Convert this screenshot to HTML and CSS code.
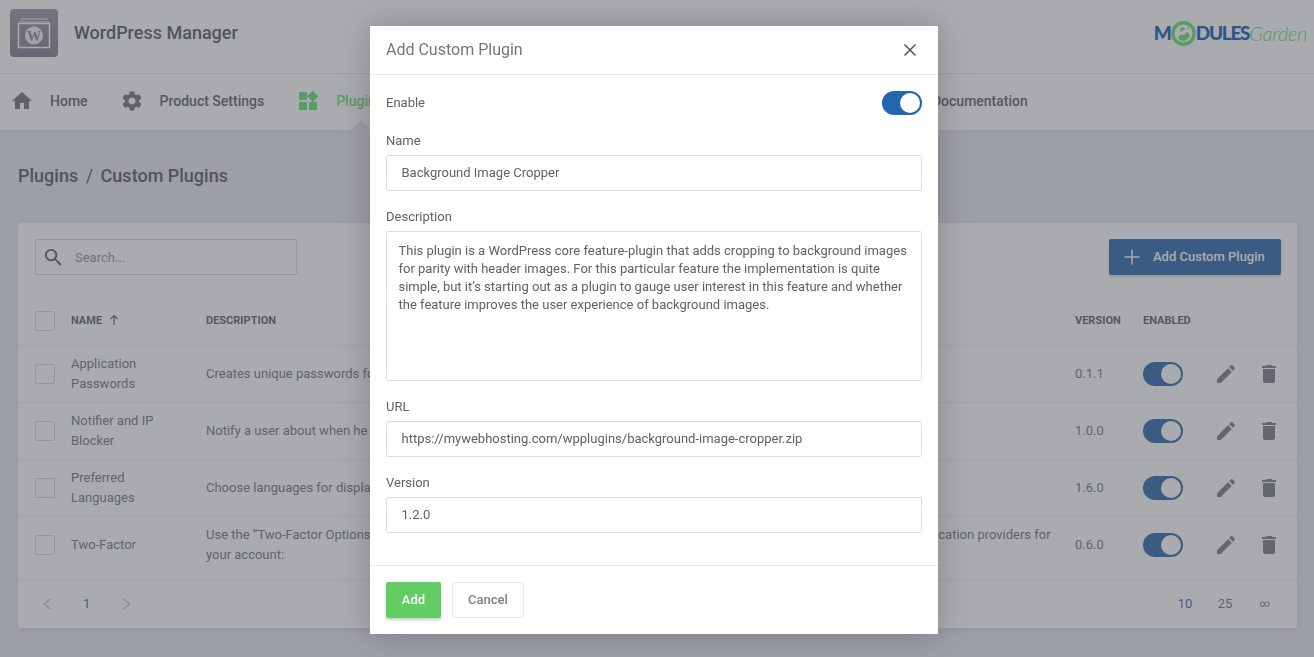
FILE: index.html
```html
<!DOCTYPE html>
<html lang="en">
<head>
<meta charset="utf-8">
<title>WordPress Manager</title>
<link rel="stylesheet" href="styles.css">
</head>
<body>
<header class="topbar">
  <div class="brand">
    <div class="app-icon">
      <svg viewBox="0 0 48 48" width="48" height="48">
        <path class="stack" d="M10 11 11 9h26l1 2zM8.500 13.500l1-1.500h29l1 1.500z"/>
        <rect class="frame" x="8.500" y="14.500" width="31" height="24" fill="none"/>
        <circle class="wp" cx="24" cy="26.500" r="9"/>
        <text class="wp-w" x="24" y="31.500" text-anchor="middle">W</text>
      </svg>
    </div>
    <span class="brand-name">WordPress Manager</span>
  </div>
  <div class="logo">
    <span class="logo-m">M</span><svg class="logo-globe" viewBox="0 0 25 25" width="25" height="25">
      <circle cx="12.500" cy="12.500" r="10.700" fill="none" stroke="#5fdc6a" stroke-width="3.400"/>
      <path fill="#5fdc6a" d="M7 17c1-3 4-4 6-3l3-3 3 3c-1 3-3 5-6 6-2 0-5-1-6-3zM9 7l4-1 1 2-4 3zM16 6l2 1-1 2z"/>
    </svg><span class="logo-m logo-rest">DULES</span><span class="logo-g">Garden</span>
  </div>
</header>

<nav class="mainnav">
  <a class="navitem">
    <svg class="navicon" viewBox="0 0 24 24"><path d="M10 20v-6h4v6h5v-8h3L12 3 2 12h3v8z"/></svg>
    <span>Home</span>
  </a>
  <a class="navitem">
    <svg class="navicon" viewBox="0 0 24 24"><path d="M19.140 12.940c.04-.3.06-.61.06-.94 0-.32-.02-.64-.07-.94l2.030-1.580c.18-.14.23-.41.12-.61l-1.920-3.320c-.12-.22-.37-.29-.59-.22l-2.390.96c-.5-.38-1.030-.7-1.620-.94l-.36-2.540c-.04-.24-.24-.41-.48-.41h-3.840c-.24 0-.43.17-.47.41l-.36 2.540c-.59.24-1.130.57-1.620.94l-2.390-.96c-.22-.08-.47 0-.59.22L2.740 8.870c-.12.21-.08.47.12.61l2.030 1.580c-.05.3-.09.63-.09.94s.02.64.07.94l-2.030 1.580c-.18.14-.23.41-.12.61l1.920 3.320c.12.22.37.29.59.22l2.390-.96c.5.38 1.030.7 1.620.94l.36 2.540c.05.24.24.41.48.41h3.840c.24 0 .44-.17.47-.41l.36-2.540c.59-.24 1.130-.56 1.620-.94l2.390.96c.22.08.47 0 .59-.22l1.920-3.320c.12-.22.07-.47-.12-.61l-2.010-1.580zM12 15.600c-1.980 0-3.600-1.620-3.600-3.600s1.620-3.600 3.600-3.600 3.600 1.620 3.600 3.600-1.620 3.600-3.600 3.600z"/></svg>
    <span>Product Settings</span>
  </a>
  <a class="navitem active">
    <svg class="navicon" viewBox="0 0 24 24"><path d="M13 13v8h8v-8h-8zM3 21h8v-8H3v8zM3 3v8h8V3H3zm13.660-1.310L11 7.340 16.660 13l5.660-5.660-5.660-5.650z"/></svg>
    <span>Plugins</span>
  </a>
  <a class="navitem hidden-wide"><span>Plugin Packages</span></a>
  <a class="navitem">
    <svg class="navicon" viewBox="0 0 24 24"><path d="M14 2H6c-1.100 0-2 .9-2 2v16c0 1.100.9 2 2 2h12c1.100 0 2-.9 2-2V8l-6-6z"/></svg>
    <span>Documentation</span>
  </a>
</nav>

<main class="content">
  <h1 class="crumbs"><span>Plugins</span><span class="crumb-sep">/</span><span>Custom Plugins</span></h1>

  <section class="card">
    <div class="toolbar">
      <div class="search">
        <svg class="search-icon" viewBox="0 0 24 24"><path d="M15.500 14h-.79l-.28-.27A6.470 6.470 0 0 0 16 9.500 6.500 6.500 0 1 0 9.500 16c1.610 0 3.090-.59 4.230-1.570l.27.28v.79l5 4.990L20.490 19l-4.990-5zm-6 0C7.010 14 5 11.990 5 9.500S7.010 5 9.500 5 14 7.010 14 9.500 11.990 14 9.500 14z"/></svg>
        <span class="placeholder">Search...</span>
      </div>
      <button class="btn-primary">
        <svg class="plus" viewBox="0 0 16 16" width="16" height="16"><path d="M8 .5v15M.5 8h15"/></svg>
        <span>Add Custom Plugin</span>
      </button>
    </div>

    <table class="plugins">
      <colgroup><col class="c-check"><col class="c-name"><col class="c-desc"><col class="c-ver"><col class="c-en"><col class="c-act"></colgroup>
      <thead>
        <tr>
          <th class="check"><span class="box"></span></th>
          <th>Name <svg class="sort" viewBox="0 0 12 12" width="12" height="12"><path d="M6 11V1.500M2.500 5 6 1.500 9.500 5"/></svg></th>
          <th>Description</th>
          <th>Version</th>
          <th>Enabled</th>
          <th></th>
        </tr>
      </thead>
      <tbody>
        <tr>
          <td class="check"><span class="box"></span></td>
          <td>Application Passwords</td>
          <td>Creates unique passwords for applications to authenticate users without revealing their main passwords.</td>
          <td>0.1.1</td>
          <td><span class="switch"></span></td>
          <td><div class="actions">
            <svg viewBox="0 0 24 24"><path d="M3 17.250V21h3.750L17.810 9.940l-3.750-3.750L3 17.250zM20.710 7.040c.39-.39.39-1.020 0-1.410l-2.340-2.340c-.39-.39-1.020-.39-1.410 0l-1.830 1.830 3.750 3.750 1.830-1.830z"/></svg>
            <svg viewBox="0 0 24 24"><path d="M6 19c0 1.100.9 2 2 2h8c1.100 0 2-.9 2-2V7H6v12zM19 4h-3.500l-1-1h-5l-1 1H5v2h14V4z"/></svg>
          </div></td>
        </tr>
        <tr>
          <td class="check"><span class="box"></span></td>
          <td>Notifier and IP Blocker</td>
          <td>Notify a user about when he logs in from a new device or an unknown IP address and block that address.</td>
          <td>1.0.0</td>
          <td><span class="switch"></span></td>
          <td><div class="actions">
            <svg viewBox="0 0 24 24"><path d="M3 17.250V21h3.750L17.810 9.940l-3.750-3.750L3 17.250zM20.710 7.040c.39-.39.39-1.020 0-1.410l-2.340-2.340c-.39-.39-1.020-.39-1.410 0l-1.830 1.830 3.750 3.750 1.830-1.830z"/></svg>
            <svg viewBox="0 0 24 24"><path d="M6 19c0 1.100.9 2 2 2h8c1.100 0 2-.9 2-2V7H6v12zM19 4h-3.500l-1-1h-5l-1 1H5v2h14V4z"/></svg>
          </div></td>
        </tr>
        <tr>
          <td class="check"><span class="box"></span></td>
          <td>Preferred Languages</td>
          <td>Choose languages for displaying WordPress in, in order of preference.</td>
          <td>1.6.0</td>
          <td><span class="switch"></span></td>
          <td><div class="actions">
            <svg viewBox="0 0 24 24"><path d="M3 17.250V21h3.750L17.810 9.940l-3.750-3.750L3 17.250zM20.710 7.040c.39-.39.39-1.020 0-1.410l-2.340-2.340c-.39-.39-1.020-.39-1.410 0l-1.830 1.830 3.750 3.750 1.830-1.830z"/></svg>
            <svg viewBox="0 0 24 24"><path d="M6 19c0 1.100.9 2 2 2h8c1.100 0 2-.9 2-2V7H6v12zM19 4h-3.500l-1-1h-5l-1 1H5v2h14V4z"/></svg>
          </div></td>
        </tr>
        <tr class="last">
          <td class="check"><span class="box"></span></td>
          <td>Two-Factor</td>
          <td>Use the “Two-Factor Options” section under “Users” → "Your Profile" to enable and configure one or multiple two-factor authentication providers for your account:</td>
          <td>0.6.0</td>
          <td><span class="switch"></span></td>
          <td><div class="actions">
            <svg viewBox="0 0 24 24"><path d="M3 17.250V21h3.750L17.810 9.940l-3.750-3.750L3 17.250zM20.710 7.040c.39-.39.39-1.020 0-1.410l-2.340-2.340c-.39-.39-1.020-.39-1.410 0l-1.830 1.830 3.750 3.750 1.830-1.830z"/></svg>
            <svg viewBox="0 0 24 24"><path d="M6 19c0 1.100.9 2 2 2h8c1.100 0 2-.9 2-2V7H6v12zM19 4h-3.500l-1-1h-5l-1 1H5v2h14V4z"/></svg>
          </div></td>
        </tr>
      </tbody>
    </table>

    <footer class="pager">
      <div class="pages">
        <svg class="chev" viewBox="0 0 10 14" width="10" height="14"><path d="M8.500 1.500 2.500 7l6 5.500"/></svg>
        <span class="current">1</span>
        <svg class="chev" viewBox="0 0 10 14" width="10" height="14"><path d="M1.500 1.500 7.500 7l-6 5.500"/></svg>
      </div>
      <div class="sizes">
        <span class="current">10</span><span>25</span><span class="inf">∞</span>
      </div>
    </footer>
  </section>
</main>

<div class="backdrop">
  <div class="modal">
    <div class="modal-head">
      <h2>Add Custom Plugin</h2>
      <svg class="close" viewBox="0 0 14 14" width="14" height="14"><path d="M1.500 1.500l11 11M12.500 1.500l-11 11"/></svg>
    </div>
    <form class="modal-body">
      <div class="enable-row">
        <label>Enable</label>
        <span class="switch big"></span>
      </div>
      <div class="field">
        <label for="f-name">Name</label>
        <input id="f-name" type="text" value="Background Image Cropper">
      </div>
      <div class="field">
        <label for="f-desc">Description</label>
        <textarea id="f-desc">This plugin is a WordPress core feature-plugin that adds cropping to background images for parity with header images. For this particular feature the implementation is quite simple, but it’s starting out as a plugin to gauge user interest in this feature and whether the feature improves the user experience of background images.</textarea>
      </div>
      <div class="field">
        <label for="f-url">URL</label>
        <input id="f-url" type="text" value="https://mywebhosting.com/wpplugins/background-image-cropper.zip">
      </div>
      <div class="field">
        <label for="f-ver">Version</label>
        <input id="f-ver" type="text" value="1.2.0">
      </div>
    </form>
    <div class="modal-foot">
      <button class="btn-add">Add</button>
      <button class="btn-cancel">Cancel</button>
    </div>
  </div>
</div>
</body>
</html>
```

FILE: styles.css
```css
* { box-sizing: border-box; }
html, body { height: 100%; }
body {
  margin: 0;
  height: 657px;
  overflow: hidden;
  background: #e4e6ec;
  font-family: Roboto, "Liberation Sans", sans-serif;
  font-size: 13px;
  color: #555561;
}

/* top bar */
.topbar {
  height: 74px;
  background: #fff;
  border-bottom: 1px solid #e8e9ee;
  display: flex;
  align-items: center;
  justify-content: space-between;
  padding: 0 7px 0 10px;
}
.brand { display: flex; align-items: center; gap: 16px; margin-top: -8px; }
.app-icon {
  width: 48px;
  height: 48px;
  border-radius: 4px;
  background: linear-gradient(#93939f, #75757f);
}
.app-icon svg { display: block; }
.stack { fill: #c4c5cb; }
.frame { stroke: #fff; stroke-width: 1.500; }
.wp { fill: #f2f2f4; }
.wp-w { font-family: "Liberation Serif", serif; font-size: 14px; font-weight: 700; fill: #83838f; }
.brand-name { font-size: 18px; font-weight: 500; color: #4d4f59; }
.logo { display: flex; align-items: center; margin-top: -7px; font-family: Lato, sans-serif; line-height: 24px; }
.logo-m { font-size: 19px; font-weight: 900; color: #0053b5; letter-spacing: -1px; }
.logo-rest { letter-spacing: -1.300px; }
.logo-g { font-family: Lato, sans-serif; font-size: 20px; font-weight: 300; font-style: italic; color: #5fd06a; letter-spacing: -.3px; }

/* nav */
.mainnav {
  height: 56px;
  background: #fff;
  display: flex;
  align-items: center;
  padding: 0 0 2px 10px;
  gap: 32px;
  box-shadow: 0 1px 2px rgba(0,0,0,.05);
}
.navitem {
  position: relative;
  display: flex;
  align-items: center;
  gap: 16px;
  font-size: 14px;
  font-weight: 500;
  color: #555561;
  height: 100%;
}
.navicon { width: 24px; height: 24px; fill: #696b75; flex: none; }
.navitem.active { color: #5fdc6a; }
.navitem.active .navicon { fill: #5fdc6a; }
.navitem.active::after {
  content: "";
  position: absolute;
  left: 58px;
  bottom: -9px;
  width: 14px;
  height: 14px;
  background: #e4e6ec;
  transform: rotate(45deg);
}
.hidden-wide { width: 445px; }

/* page */
.content { padding: 0 17px 0 18px; }
.crumbs {
  margin: 0;
  height: 93px;
  display: flex;
  align-items: center;
  font-size: 18px;
  font-weight: 500;
  color: #4d4f59;
  padding-bottom: 3px;
}
.crumb-sep { margin: 0 7.500px; font-weight: 400; }

.card {
  background: #fff;
  border-radius: 3px;
  box-shadow: 0 2px 6px rgba(0,0,0,.08);
}
.toolbar {
  display: flex;
  justify-content: space-between;
  padding: 16px 16px 20px 17px;
}
.search {
  width: 262px;
  height: 36px;
  border: 1px solid #d3d4de;
  border-radius: 2px;
  display: flex;
  align-items: center;
  padding-left: 6px;
  gap: 10px;
}
.search-icon { width: 23px; height: 23px; fill: #4b4d58; }
.placeholder { color: #8a8b96; font-size: 13px; }
.btn-primary {
  width: 172px;
  height: 36px;
  border: 0;
  border-radius: 2px;
  background: #1f5fa6;
  color: #fff;
  font: 500 13px Roboto, sans-serif;
  display: flex;
  align-items: center;
  padding: 0 0 2px 15px;
  gap: 13px;
  box-shadow: 0 2px 3px rgba(0,0,0,.15);
}
.plus { fill: none; stroke: #fff; stroke-width: 1.500; margin-top: 2px; }

/* table */
.plugins { width: 100%; border-collapse: collapse; table-layout: fixed; }
.c-check { width: 53px; }
.c-name { width: 135px; }
.c-desc { width: 869px; }
.c-ver { width: 68px; }
.c-en { width: 73px; }
.plugins th {
  height: 50px;
  padding: 2px 0 0;
  text-align: left;
  font-size: 11px;
  font-weight: 700;
  text-transform: uppercase;
  color: #555561;
  border-bottom: 1px solid #eceef3;
}
.plugins td {
  height: 57px;
  padding: 0 20px 0 0;
  line-height: 20px;
  color: #6a6b76;
  border-bottom: 1px solid #eceef3;
}
.plugins .last td { height: 63px; padding-bottom: 6px; }
.plugins td:nth-child(2) { padding-right: 16px; }
.plugins td.check, .plugins th.check { padding-left: 17px; }
.box {
  display: block;
  width: 20px;
  height: 20px;
  border: 1px solid #d3d4de;
  border-radius: 2px;
}
.sort { fill: none; stroke: #555561; stroke-width: 1.200; margin-left: 3px; vertical-align: -2px; }
.switch {
  display: block;
  position: relative;
  width: 40px;
  height: 24px;
  border-radius: 12px;
  background: #1f5fa6;
}
.switch::after {
  content: "";
  position: absolute;
  right: 2px;
  top: 2px;
  width: 20px;
  height: 20px;
  border-radius: 50%;
  background: #fff;
}
.switch.big { background: #2267ad; }
.actions { display: flex; gap: 19px; margin-left: -2px; }
.actions svg { width: 24px; height: 24px; fill: #71727e; flex: none; }

.pager {
  height: 48px;
  display: flex;
  align-items: center;
  justify-content: space-between;
  padding: 0 12px 0 24px;
}
.pages { display: flex; align-items: center; gap: 31px; }
.pages .current { width: 8px; }
.chev { fill: none; stroke: #c3c4cc; stroke-width: 1.500; }
.sizes { display: flex; align-items: center; }
.sizes span { width: 40px; text-align: center; }
.pager span { color: #6a6b76; }
.pager .current { color: #2c6096; }
.pager .inf { font-size: 10px; }

/* modal */
.backdrop {
  position: fixed;
  inset: 0;
  background: rgba(85, 87, 95, .5);
  display: flex;
  justify-content: center;
  align-items: flex-start;
  padding: 26px 6px 0 0;
}
.modal {
  width: 568px;
  height: 608px;
  background: #fff;
  box-shadow: 0 0 30px rgba(0,0,0,.22);
  display: flex;
  flex-direction: column;
}
.modal-head {
  height: 49px;
  flex: none;
  border-bottom: 1px solid #e8e9ef;
  display: flex;
  align-items: center;
  justify-content: space-between;
  padding: 0 21px 2px 16px;
}
.modal-head h2 { margin: 0; font-size: 16px; font-weight: 400; color: #737580; }
.close { fill: none; stroke: #555561; stroke-width: 1.500; margin-top: 2px; }
.modal-body { flex: 1; padding: 16px 16px 0; display: flex; flex-direction: column; }
.enable-row { display: flex; align-items: center; justify-content: space-between; height: 24px; margin-bottom: 18px; }
.modal-body label { display: block; font-size: 13px; line-height: 16px; color: #5f606b; }
.field { margin-bottom: 18px; }
.field label { margin-bottom: 6px; }
.field input, .field textarea {
  display: block;
  width: 100%;
  height: 36px;
  border: 1px solid #dcdde8;
  border-radius: 2px;
  padding: 0 14.500px 2px;
  font: 13px Roboto, sans-serif;
  color: #5f606b;
  background: #fff;
  outline: 0;
}
.field textarea {
  height: 150px;
  padding: 10px 11.500px;
  line-height: 18px;
  resize: none;
  overflow: hidden;
}
.modal-foot {
  height: 69px;
  flex: none;
  border-top: 1px solid #e8e9ef;
  padding: 16px;
  display: flex;
  gap: 11px;
}
.btn-add, .btn-cancel {
  height: 36px;
  border-radius: 2px;
  font: 500 13px Roboto, sans-serif;
  padding: 0 0 2px;
}
.btn-add {
  width: 55px;
  border: 0;
  background: #63cc63;
  color: #fff;
  box-shadow: 0 2px 3px rgba(0,0,0,.2);
}
.btn-cancel {
  width: 72px;
  border: 1px solid #e8e9ef;
  background: #fff;
  color: #7b7d88;
}
```
